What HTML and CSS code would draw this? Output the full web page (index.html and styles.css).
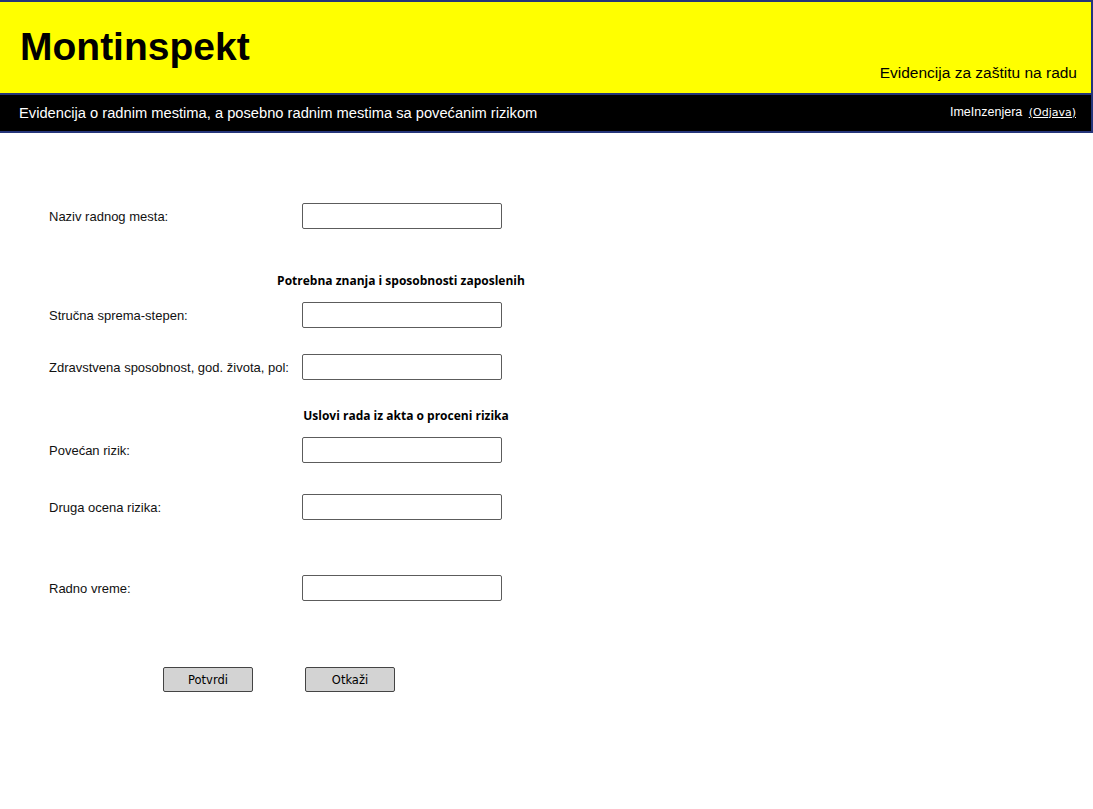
FILE: index.html
```html
<!DOCTYPE html>
<html lang="sr">
<head>
<meta charset="utf-8">
<title>Montinspekt</title>
<link rel="stylesheet" href="styles.css">
</head>
<body>
<header class="top">
  <div class="brand">
    <h1 class="logo">Montinspekt</h1>
    <div class="tagline">Evidencija za zaštitu na radu</div>
  </div>
  <div class="subbar">
    <div class="subtitle">Evidencija o radnim mestima, a posebno radnim mestima sa povećanim rizikom</div>
    <div class="user">ImeInzenjera <a class="logout" href="#">(Odjava)</a></div>
  </div>
</header>
<main class="form">
  <div class="row r1"><label class="lbl">Naziv radnog mesta:</label><div class="field"></div></div>
  <div class="section s1">Potrebna znanja i sposobnosti zaposlenih</div>
  <div class="row r2"><label class="lbl">Stručna sprema-stepen:</label><div class="field"></div></div>
  <div class="row r3"><label class="lbl">Zdravstvena sposobnost, god. života, pol:</label><div class="field"></div></div>
  <div class="section s2">Uslovi rada iz akta o proceni rizika</div>
  <div class="row r4"><label class="lbl">Povećan rizik:</label><div class="field"></div></div>
  <div class="row r5"><label class="lbl">Druga ocena rizika:</label><div class="field"></div></div>
  <div class="row r6"><label class="lbl">Radno vreme:</label><div class="field"></div></div>
  <div class="actions">
    <button class="btn">Potvrdi</button>
    <button class="btn">Otkaži</button>
  </div>
</main>
</body>
</html>
```
FILE: styles.css
```css
html, body {
  margin: 0;
  padding: 0;
  background: #ffffff;
  font-family: "Liberation Sans", Arial, sans-serif;
  color: #111;
}
.top {
  width: 1093px;
}
.brand {
  background: #ffff00;
  border-top: 2px solid #25357a;
  border-right: 2px solid #25357a;
  box-sizing: border-box;
  height: 93px;
  display: flex;
  justify-content: space-between;
  align-items: flex-start;
  padding: 0 14px 0 20px;
}
.logo {
  margin: 0;
  font-size: 39px;
  font-weight: bold;
  line-height: 45px;
  padding-top: 22px;
  color: #000;
}
.tagline {
  font-size: 15.5px;
  color: #000;
  padding-top: 62px;
  line-height: 18px;
}
.subbar {
  background: #000;
  border-top: 2px solid #25357a;
  border-bottom: 2px solid #25357a;
  border-right: 2px solid #25357a;
  height: 40px;
  box-sizing: border-box;
  display: flex;
  justify-content: space-between;
  align-items: center;
  padding: 0 15px 0 19px;
  color: #fff;
}
.subtitle {
  font-size: 14.7px;
}
.user {
  font-size: 12.5px;
  margin-top: -3px;
}
.logout {
  color: #fff;
  font-family: "DejaVu Sans", sans-serif;
  font-size: 11px;
  margin-left: 3px;
}
.form {
  display: flex;
  flex-direction: column;
  padding-left: 49px;
}
.row {
  display: flex;
  align-items: center;
  height: 26px;
}
.lbl {
  width: 253px;
  font-size: 13px;
  color: #111;
}
.field {
  width: 200px;
  height: 26px;
  box-sizing: border-box;
  border: 1.5px solid #5c5c5c;
  border-radius: 2px;
  background: #fff;
}
.section {
  width: 300px;
  text-align: center;
  font-family: "Open Sans", "Noto Sans", sans-serif;
  font-weight: bold;
  font-size: 12px;
  line-height: 16px;
  color: #000;
}
.r1 { margin-top: 70px; }
.s1 { margin-top: 44px; margin-left: 202px; }
.r2 { margin-top: 13px; }
.r3 { margin-top: 26px; }
.s2 { margin-top: 28px; margin-left: 207px; }
.r4 { margin-top: 13px; }
.r5 { margin-top: 31px; }
.r6 { margin-top: 55px; }
.actions {
  display: flex;
  gap: 52px;
  margin-top: 66px;
  margin-left: 114px;
}
.btn {
  width: 90px;
  height: 25px;
  box-sizing: border-box;
  background: #d3d3d3;
  border: 1.5px solid #444;
  border-radius: 2px;
  font-family: "DejaVu Sans", sans-serif;
  font-size: 11.5px;
  color: #000;
  padding: 0;
}
```
